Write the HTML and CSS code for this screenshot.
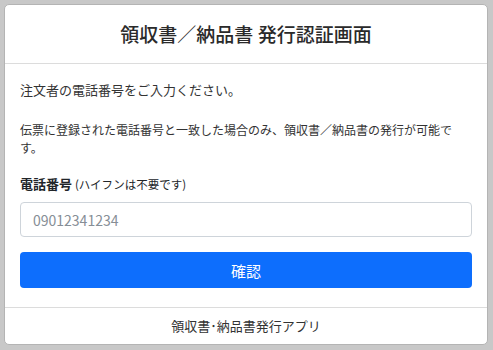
FILE: index.html
```html
<!DOCTYPE html>
<html lang="ja">
<head>
  <meta charset="UTF-8" />
  <meta name="viewport" content="width=device-width, initial-scale=1.0" />
  <title>領収書／納品書 発行認証画面</title>
  <link rel="stylesheet" href="styles.css">
</head>
<body>
  <div class="card">
    <div class="card-header">
      <h1>領収書／納品書 発行認証画面</h1>
    </div>

    <form class="card-body" onsubmit="return false">
      <p class="lead">注文者の電話番号をご入力ください。</p>
      <p class="note">伝票に登録された電話番号と一致した場合のみ、領収書／納品書の発行が可能です。</p>

      <label for="tel" class="form-label">電話番号 <small>(ハイフンは不要です)</small></label>
      <input type="tel" id="tel" class="form-control" placeholder="09012341234">

      <button type="submit" class="btn-primary">確認</button>
    </form>

    <div class="card-footer">領収書･納品書発行アプリ</div>
  </div>
</body>
</html>
```

FILE: styles.css
```css
:root {
  --bg: #c8c8c8;
  --card: #fff;
  --line: #dcdcdc;
  --text: #333;
  --primary: #0d6efd;
}
body {
  margin: 0;
  padding: 4px 5px 6px 4px;
  background: var(--bg);
  color: var(--text);
  font-family: "Noto Sans CJK JP", "Noto Sans", sans-serif;
}
.card {
  background: var(--card);
  border: 1px solid #b4b4b4;
  border-radius: 5px;
  overflow: hidden;
}
.card-header {
  padding: 17px 16px;
  border-bottom: 1px solid var(--line);
  text-align: center;
}
.card-header h1 {
  margin: 0;
  font-size: 19px;
  line-height: 24px;
  font-weight: 500;
  color: #2a2a2a;
}
.card-body {
  display: flex;
  flex-direction: column;
  padding: 15px 15px 19px 15px;
}
.lead {
  margin: 0 0 20px;
  font-size: 13px;
  line-height: 22px;
}
.note {
  margin: 0 0 16px;
  font-size: 12px;
  line-height: 18px;
}
.form-label {
  margin-bottom: 7px;
  font-size: 13px;
  line-height: 21px;
  font-weight: bold;
  color: #212529;
}
.form-label small {
  font-size: 11.5px;
  font-weight: normal;
}
.form-control {
  height: 35px;
  padding: 6px 12px;
  border: 1px solid #ced4da;
  border-radius: 4px;
  font-family: inherit;
  font-size: 14px;
  color: #212529;
  box-sizing: border-box;
}
.form-control::placeholder {
  color: #868e96;
}
.btn-primary {
  margin-top: 15px;
  height: 36px;
  border: none;
  border-radius: 4px;
  background: var(--primary);
  color: white;
  font-family: inherit;
  font-size: 15px;
  cursor: pointer;
}
.card-footer {
  padding: 8px 16px;
  border-top: 1px solid var(--line);
  text-align: center;
  font-size: 13px;
  line-height: 20px;
}
```
